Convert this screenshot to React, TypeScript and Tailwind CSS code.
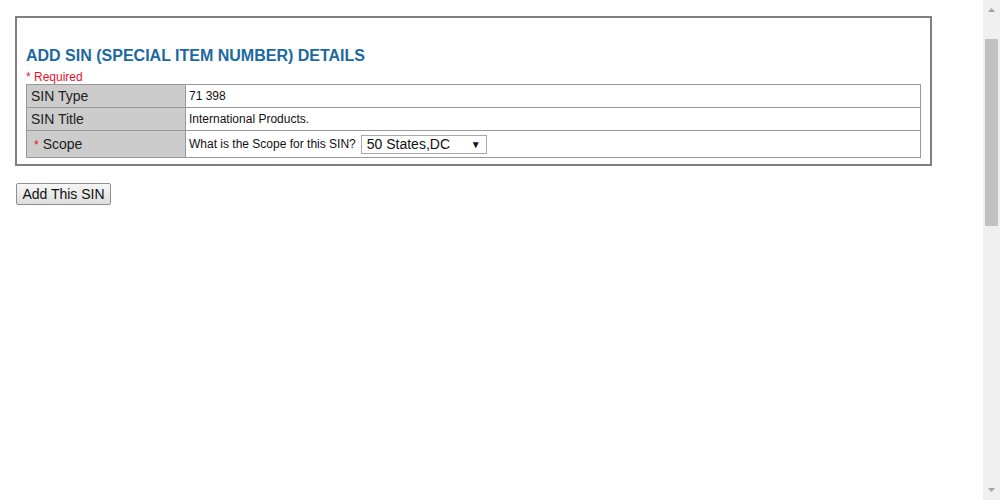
import React from "react"

const font = { fontFamily: '"Liberation Sans", Arial, sans-serif' }

function Row({ label, required, children, tall }: { label: string, required?: boolean, children: React.ReactNode, tall?: boolean }) {
  return (
    <tr className={tall ? "h-[27px]" : "h-[23px]"}>
      <td className="w-[159px] bg-[#cccccc] border border-[#999999] pl-[4px] text-[14px] text-[#222222] align-middle">
        {required && <span className="text-[#e8132b] text-[12px] pl-[3px] pr-[4px]">*</span>}
        {label}
      </td>
      <td className="border border-[#999999] pl-[3px] text-[12px] text-[#111111] align-middle">{children}</td>
    </tr>
  )
}

export default function App() {
  return (
    <div className="flex h-[500px] w-[1000px] bg-white overflow-hidden" style={font}>
      <div className="flex-1 pl-[15px] pt-[16px]">
        <div className="w-[917px] border-2 border-[#808080] px-[9px] pt-[28px] pb-[6px]">
          <h2 className="text-[16px] leading-[20px] font-bold text-[#1a69a0]">ADD SIN (SPECIAL ITEM NUMBER) DETAILS</h2>
          <div className="text-[12px] leading-[14px] text-[#e8132b] mt-[4px]">* Required</div>
          <table className="w-[895px] border-collapse">
            <tbody>
              <Row label="SIN Type">71 398</Row>
              <Row label="SIN Title">International Products.</Row>
              <Row label="Scope" required tall>
                <div className="flex items-center gap-[5px]">
                  <span>What is the Scope for this SIN?</span>
                  <div className="w-[126px] h-[19px] border border-[#a9a9a9] bg-white flex items-center justify-between pl-[5px] pr-[5px] text-[14px] text-[#111111]">
                    <span>50 States,DC</span>
                    <span className="text-[10px]">▼</span>
                  </div>
                </div>
              </Row>
            </tbody>
          </table>
        </div>
        <button className="mt-[17px] ml-[1px] h-[22px] w-[95px] border border-[#8f8f8f] rounded-[2px] bg-gradient-to-b from-[#f6f6f6] to-[#dedede] text-[14px] text-[#111111]">
          Add This SIN
        </button>
      </div>
      <div className="w-[17px] bg-[#f0f0f0] flex flex-col items-center">
        <div className="h-[20px] flex items-center justify-center">
          <svg width="7" height="4" viewBox="0 0 7 4"><path d="M3.5 0L7 4H0z" fill="#a3a3a3" /></svg>
        </div>
        <div className="mt-[19px] w-[13px] h-[187px] bg-[#c1c1c1]" />
        <div className="flex-1" />
        <div className="h-[20px] flex items-center justify-center">
          <svg width="7" height="4" viewBox="0 0 7 4"><path d="M0 0H7L3.5 4z" fill="#a3a3a3" /></svg>
        </div>
      </div>
    </div>
  )
}
